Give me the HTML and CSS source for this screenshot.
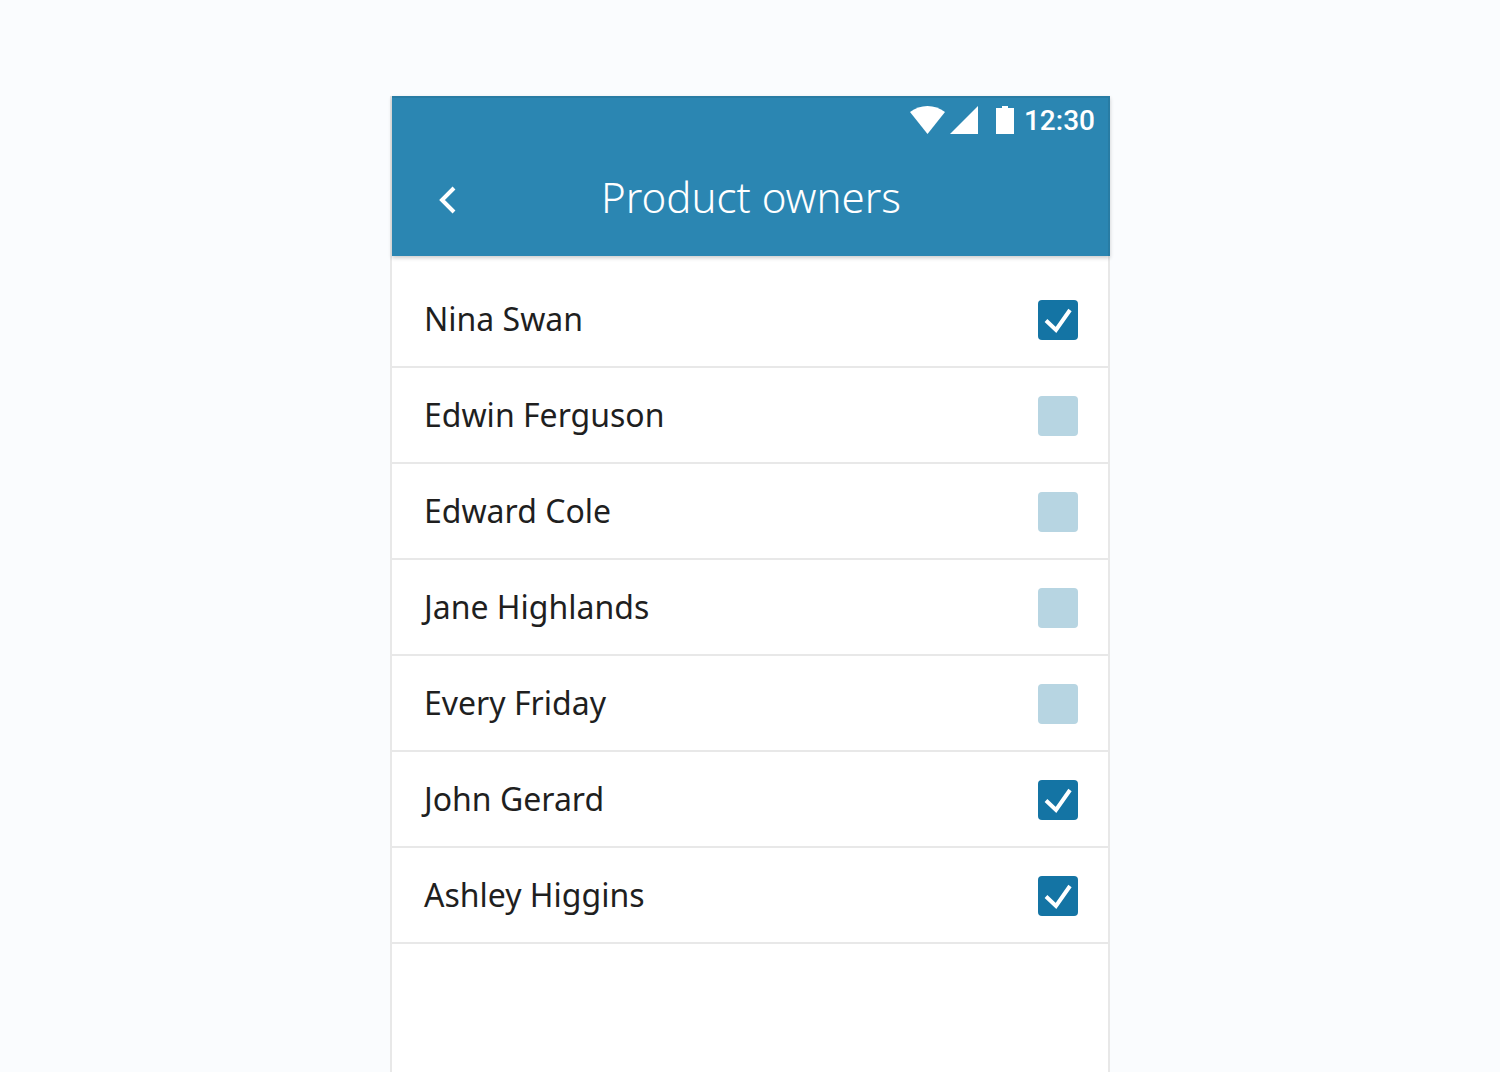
FILE: index.html
```html
<!DOCTYPE html>
<html lang="en">
<head>
<meta charset="utf-8">
<meta name="viewport" content="width=device-width, initial-scale=1">
<title>Product owners</title>
<link rel="stylesheet" href="styles.css">
</head>
<body>
<main class="phone">
  <header class="header">
    <div class="status">
      <svg class="wifi" width="36" height="28" viewBox="0 0 36 28" aria-hidden="true"><path d="M0 6C10-2 25-2 35 6L17.500 28Z" fill="currentColor"/></svg>
      <svg class="signal" width="28" height="28" viewBox="0 0 28 28" aria-hidden="true"><path d="M0 28L28 0V28Z" fill="currentColor"/></svg>
      <svg class="battery" width="18" height="28" viewBox="0 0 18 28" aria-hidden="true"><path d="M0 2H6V0H12V2H18V28H0Z" fill="currentColor"/></svg>
      <time class="clock">12:30</time>
    </div>
    <div class="navbar">
      <button class="back" type="button" aria-label="Back">
        <svg width="18" height="28" viewBox="0 0 18 28" aria-hidden="true"><path d="M15 2L3 14L15 26" fill="none" stroke="currentColor" stroke-width="4"/></svg>
      </button>
      <h1 class="title">Product owners</h1>
    </div>
  </header>
  <ul class="list">
    <li><label class="row"><span>Nina Swan</span><input class="check" type="checkbox" checked></label></li>
    <li><label class="row"><span>Edwin Ferguson</span><input class="check" type="checkbox"></label></li>
    <li><label class="row"><span>Edward Cole</span><input class="check" type="checkbox"></label></li>
    <li><label class="row"><span>Jane Highlands</span><input class="check" type="checkbox"></label></li>
    <li><label class="row"><span>Every Friday</span><input class="check" type="checkbox"></label></li>
    <li><label class="row"><span>John Gerard</span><input class="check" type="checkbox" checked></label></li>
    <li><label class="row"><span>Ashley Higgins</span><input class="check" type="checkbox" checked></label></li>
  </ul>
</main>
</body>
</html>
```
FILE: styles.css
```css
* {
  box-sizing: border-box;
}

body {
  display: flex;
  flex-direction: column;
  align-items: center;
  min-height: 100vh;
  margin: 0;
  padding-top: 96px;
  background: #fafcfe;
  color: #1f1f1f;
  font-family: "Noto Sans", "Open Sans", sans-serif;
}

.phone {
  flex: 1;
  width: 100%;
  max-width: 720px;
  border: solid #e8e8e8;
  border-width: 0 2px;
  background: #fff;
}

.header {
  height: 160px;
  margin-right: -2px;
  background: #2b86b2;
  box-shadow: inset 0 2px #287ca4, inset -2px 0 #287ca4, 0 2px 4px rgba(0, 0, 0, 0.2);
  color: #fff;
}

.status {
  display: flex;
  align-items: center;
  justify-content: flex-end;
  height: 48px;
  padding-right: 15px;
}

.signal {
  margin-left: 4px;
}

.battery {
  margin: 0 10px 0 18px;
}

.clock {
  padding-top: 2px;
  font: 500 28px/48px Roboto, sans-serif;
}

.navbar {
  display: grid;
  grid-template-columns: 112px 1fr 112px;
  align-items: center;
  height: 112px;
}

.back {
  display: flex;
  align-items: center;
  justify-content: center;
  height: 96px;
  padding: 0;
  border: 0;
  background: none;
  color: inherit;
}

.title {
  margin: 0;
  padding-bottom: 6px;
  font-size: 42px;
  font-weight: 300;
  line-height: 56px;
  text-align: center;
}

.list {
  margin: 0;
  padding: 16px 0 0;
  list-style: none;
}

.row {
  display: flex;
  align-items: center;
  justify-content: space-between;
  height: 96px;
  padding: 2px 30px 0 32px;
  border-bottom: 2px solid #e8e8e8;
  font-size: 32px;
  line-height: 44px;
}

.row span {
  padding-bottom: 2px;
}

.check {
  appearance: none;
  width: 40px;
  height: 40px;
  margin: 0;
  border-radius: 4px;
  background: #b7d5e2;
}

.check:checked {
  background: #1474a4 url("data:image/svg+xml,%3Csvg xmlns='http://www.w3.org/2000/svg' viewBox='0 0 40 40'%3E%3Cpath d='M8 20.500L18 30L32 10' fill='none' stroke='white' stroke-width='4'/%3E%3C/svg%3E");
}
```
